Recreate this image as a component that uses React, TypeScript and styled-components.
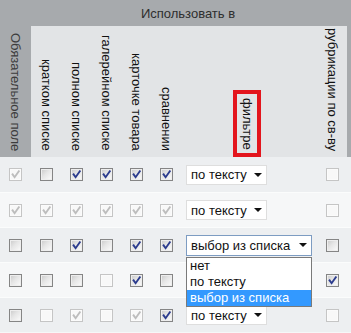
import React from "react";
import styled, { createGlobalStyle } from "styled-components";

const Global = createGlobalStyle`
  html, body { margin: 0; padding: 0; background: #f6f7f8; }
  body {
    font-family: "Liberation Sans", Arial, sans-serif;
    font-size: 13px;
    color: #111;
  }
`;

const COLS = "31px repeat(5, 30px) 136px 30px 4px";

const Table = styled.div`
  width: 351px;
  overflow: hidden;
`;

const Header = styled.div`
  display: grid;
  grid-template-columns: ${COLS};
  grid-template-rows: 26px 131px;
  background: #a7aaad;
`;

const ObligCell = styled.div`
  grid-row: 1 / 3;
  grid-column: 1;
  display: flex;
  justify-content: center;
  align-items: flex-end;
  padding-bottom: 6px;
  color: #3c3c3c;
`;

const GroupTitle = styled.div`
  grid-row: 1;
  grid-column: 2 / 10;
  display: flex;
  align-items: center;
  justify-content: center;
  color: #2e2e2e;
  padding-right: 6px;
`;

const HeadCell = styled.div<{ $flush?: boolean; $shiftLeft?: number }>`
  grid-row: 2;
  background: #e2e4e6;
  display: flex;
  justify-content: center;
  align-items: flex-end;
  padding-bottom: ${(p) => (p.$flush ? 0 : 6)}px;
  padding-right: ${(p) => p.$shiftLeft ?? 0}px;
  color: #111;
`;

const HeadGap = styled.div`
  grid-row: 2;
`;

const Vertical = styled.span`
  writing-mode: vertical-rl;
  white-space: nowrap;
  line-height: 15px;
`;

const Marked = styled.span`
  display: flex;
  border: 4px solid #e3151d;
  padding: 4px 2px 3px 3px;
`;

const Row = styled.div<{ $alt: boolean }>`
  display: grid;
  grid-template-columns: ${COLS};
  height: 35px;
  box-sizing: border-box;
  align-items: center;
  background: ${(p) => (p.$alt ? "#f6f7f8" : "#edeff1")};
  & + & {
    border-top: 1px solid #fbfcfc;
  }
`;

const Cell = styled.div`
  display: flex;
  justify-content: center;
  align-items: center;
`;

const SelectCell = styled.div`
  display: flex;
  justify-content: flex-start;
  align-items: center;
  padding-left: 5px;
`;

type State = "c" | "u" | "dc" | "du";

const Box = styled.span<{ $checked: boolean; $disabled: boolean }>`
  width: 13px;
  height: 13px;
  box-sizing: border-box;
  display: inline-flex;
  align-items: center;
  justify-content: center;
  border: 1px solid ${(p) => (p.$disabled ? "#c5c5c5" : "#858585")};
  background: ${(p) =>
    p.$disabled
      ? "#f8f8f8"
      : "linear-gradient(135deg, #c9c9c9 0%, #e6e6e6 45%, #fcfcfc 100%)"};
  box-shadow: inset 0 0 0 1px ${(p) => (p.$disabled ? "#fbfbfb" : "#eeeeee")};
`;

const Check: React.FC<{ state: State }> = ({ state }) => {
  const checked = state === "c" || state === "dc";
  const disabled = state === "dc" || state === "du";
  return (
    <Box $checked={checked} $disabled={disabled}>
      {checked && (
        <svg width="11" height="11" viewBox="0 0 11 11">
          <path
            d="M2.6 5.4 L4.6 8.2 L8.8 2.2"
            fill="none"
            stroke={disabled ? "#bdbdbd" : "#2c3c8e"}
            strokeWidth="1.9"
            strokeLinecap="square"
          />
        </svg>
      )}
    </Box>
  );
};

const SelectWrap = styled.div`
  position: relative;
`;

const SelectBox = styled.div<{ $open?: boolean; $w: number }>`
  width: ${(p) => p.$w}px;
  height: ${(p) => (p.$open ? 21 : 20)}px;
  box-sizing: border-box;
  border: 1px solid ${(p) => (p.$open ? "#7d9cc2" : "#dedede")};
  background: #fff;
  display: flex;
  align-items: center;
  justify-content: space-between;
  padding: 0 4px 0 4px;
  color: #111;
  white-space: nowrap;
`;

const Arrow = styled.span`
  width: 0;
  height: 0;
  border-left: 4px solid transparent;
  border-right: 4px solid transparent;
  border-top: 4px solid #111;
`;

const List = styled.div`
  position: absolute;
  left: 0;
  top: 22px;
  width: 126px;
  box-sizing: border-box;
  border: 1px solid #7a7a7a;
  background: #fff;
  z-index: 5;
`;

const Option = styled.div<{ $active?: boolean }>`
  height: 16px;
  line-height: 16px;
  padding-left: 3px;
  white-space: nowrap;
  color: ${(p) => (p.$active ? "#fff" : "#111")};
  background: ${(p) => (p.$active ? "#3399ff" : "transparent")};
`;

type RowData = {
  boxes: State[];
  select: "text" | "open" | "hidden";
  right: State;
};

const rows: RowData[] = [
  { boxes: ["dc", "u", "c", "c", "c", "c"], select: "text", right: "du" },
  { boxes: ["dc", "dc", "dc", "dc", "dc", "dc"], select: "text", right: "du" },
  { boxes: ["u", "u", "c", "u", "c", "c"], select: "open", right: "u" },
  { boxes: ["u", "u", "u", "du", "c", "u"], select: "text", right: "c" },
  { boxes: ["u", "du", "dc", "du", "dc", "c"], select: "text", right: "du" },
];

const headers = [
  "кратком списке",
  "полном списке",
  "галерейном списке",
  "карточке товара",
  "сравнении",
];

export default function App() {
  return (
    <>
      <Global />
      <Table>
        <Header>
          <ObligCell>
            <Vertical>Обязательное поле</Vertical>
          </ObligCell>
          <GroupTitle>Использовать в</GroupTitle>
          {headers.map((h) => (
            <HeadCell key={h}>
              <Vertical>{h}</Vertical>
            </HeadCell>
          ))}
          <HeadCell $flush $shiftLeft={4}>
            <Marked>
              <Vertical>фильтре</Vertical>
            </Marked>
          </HeadCell>
          <HeadCell>
            <Vertical>рубрикации по св-ву</Vertical>
          </HeadCell>
          <HeadGap />
        </Header>
        {rows.map((r, i) => (
          <Row key={i} $alt={i % 2 === 1}>
            {r.boxes.map((b, j) => (
              <Cell key={j}>
                <Check state={b} />
              </Cell>
            ))}
            <SelectCell>
              {r.select === "open" ? (
                <SelectWrap>
                  <SelectBox $open $w={126}>
                    выбор из списка
                    <Arrow />
                  </SelectBox>
                  <List>
                    <Option>нет</Option>
                    <Option>по тексту</Option>
                    <Option $active>выбор из списка</Option>
                  </List>
                </SelectWrap>
              ) : (
                <SelectWrap>
                  <SelectBox $w={81}>
                    по тексту
                    <Arrow />
                  </SelectBox>
                </SelectWrap>
              )}
            </SelectCell>
            <Cell>
              <Check state={r.right} />
            </Cell>
            <div />
          </Row>
        ))}
      </Table>
    </>
  );
}
